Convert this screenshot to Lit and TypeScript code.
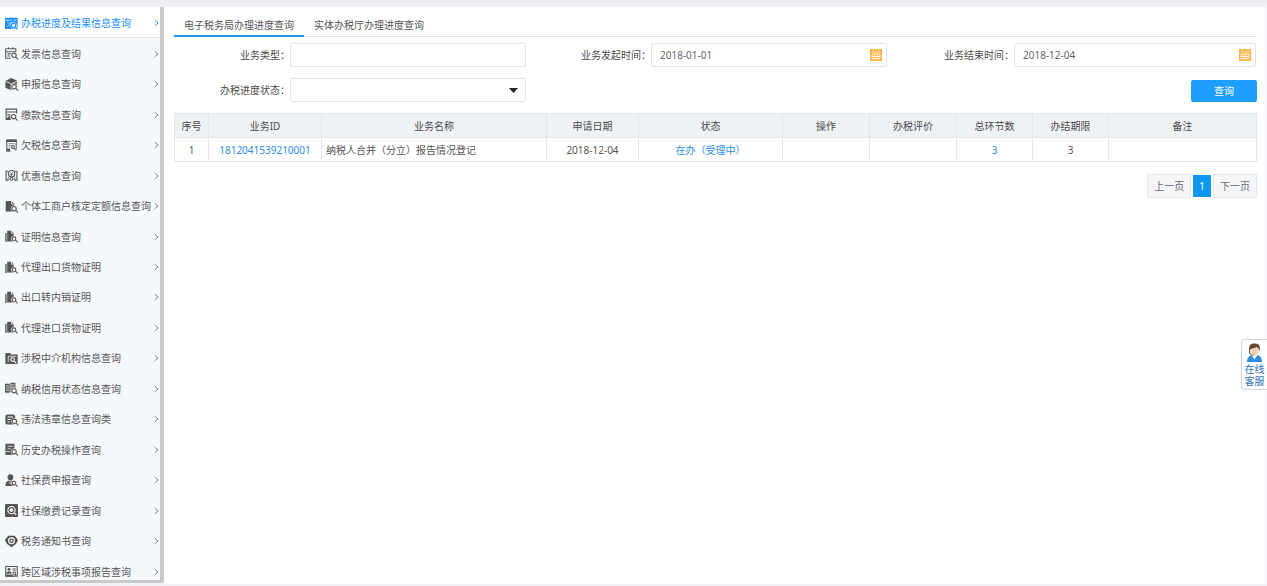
import { LitElement, html, svg, css } from "lit";
import { customElement, property } from "lit/decorators.js";
import { classMap } from "lit/directives/class-map.js";

const lens = (x: number, y: number, r = 6) => svg`
  <circle class="halo" cx=${x} cy=${y} r=${r + 2}></circle>
  <path class="halo-line" d="M${x + r - 1} ${y + r - 1}l6 6"></path>
  <circle class="ring" cx=${x} cy=${y} r=${r}></circle>
  <path class="line" d="M${x + r - 1} ${y + r - 1}l6 6"></path>`;

const stack = svg`
  <path class="soft" d="M0 8h5v25H0z"></path>
  <path class="solid" d="M6 2h12l6 6v24H6z"></path>
  <path class="cut thin" d="M18 2v7h6"></path>
  ${lens(25, 24, 5)}`;

const glyphs: Record<string, unknown> = {
  progress: svg`
    <path class="solid" d="M0 2h35v31H0z"></path>
    <path class="cut thin" d="M0 9h18M23 9h9M6 14l7 5 7-5M6 27l6-6"></path>
    ${lens(24, 23, 6)}`,
  invoice: svg`
    <path class="line" d="M2 5h28v8M2 5v26h14M2 13h28M7 19h9M7 25h7M10 1v5M22 1v5"></path>
    ${lens(25, 23, 6)}`,
  cube: svg`
    <path class="solid" d="M17 0l16 7v19L17 34 1 27V8z"></path>
    <path class="cut thin" d="M1 9l16 7 16-7M17 16v18"></path>
    ${lens(25, 24, 6)}`,
  payment: svg`
    <path class="line" d="M16 32H3V3h29v12M3 11h29M6 19h9"></path>
    <path class="solid" d="M3 33v-4l12-9v13z"></path>
    ${lens(24, 24, 6)}`,
  arrears: svg`
    <path class="line" d="M15 33H5V3h26v28"></path>
    <path class="solid" d="M4 2h28v6H4zM4 27h10v7H4z"></path>
    <path class="line thin" d="M10 13h16M10 18h7M10 23h5"></path>
    ${lens(22, 22, 4)}`,
  discount: svg`
    <path class="line" d="M8 6H3v25h6M27 6h6v25h-6"></path>
    <circle class="ring" cx="18" cy="13" r="9"></circle>
    <path class="line thin" d="M14 9l4 5 4-5M18 14v6M13 15h10M10 21l-3 10 6-3M26 21l3 10-6-3"></path>
    <circle class="ring" cx="18" cy="27" r="4"></circle>`,
  household: svg`
    <path class="solid" d="M2 3h16l8 8v21H2z"></path>
    <path class="cut thin" d="M18 3v8h8"></path>
    ${lens(25, 24, 6)}`,
  stack,
  agency: svg`
    <path class="solid" d="M1 3h13l3 4h18v26H1z"></path>
    <path class="cut thin" d="M9 12h22M9 12v16"></path>
    <circle class="cut" cx="21" cy="21" r="5"></circle>
    <path class="cut" d="M25 25l6 6"></path>`,
  credit: svg`
    <path class="solid" d="M0 5h13v25H0zM15 2h14v26H15z"></path>
    <path class="cut thin" d="M2 11h9M2 17h9M2 23h9M16 8h11M16 14h11"></path>
    ${lens(25, 24, 6)}`,
  violation: svg`
    <rect class="solid" x="1" y="4" width="27" height="28" rx="6"></rect>
    <path class="cut" d="M7 11h15M7 18h8M7 25h6"></path>
    ${lens(26, 23, 6)}`,
  history: svg`
    <path class="solid" d="M1 2h25v31H1z"></path>
    <path class="cut thin" d="M7 9h16M7 16h9M1 24h14"></path>
    ${lens(25, 24, 6)}`,
  person: svg`
    <circle class="solid" cx="15" cy="9" r="8"></circle>
    <path class="solid" d="M1 33c0-10 5-15 14-15s12 5 12 15z"></path>
    <path class="cut thin" d="M14 19v9"></path>
    ${lens(25, 25, 5)}`,
  record: svg`
    <rect class="solid" x="0" y="0" width="36" height="36" rx="3"></rect>
    <circle class="cut" cx="18" cy="17" r="10"></circle>
    <circle class="paper" cx="18" cy="17" r="5"></circle>
    <path class="cut" d="M25 24l6 6"></path>`,
  notice: svg`
    <path class="solid" d="M9 2h18l9 12-5 10-13 10L5 24 0 14z"></path>
    <circle class="cut" cx="18" cy="16" r="8"></circle>
    <circle class="paper" cx="18" cy="16" r="3"></circle>`,
  region: svg`
    <path class="ring" d="M2 4h32v27H2z"></path>
    <circle class="solid" cx="11" cy="12" r="4"></circle>
    <path class="solid" d="M4 24c0-9 14-9 14 0zM2 26h32v6H2z"></path>
    <path class="line" d="M21 11h9M21 17h9"></path>
    ${lens(26, 24, 4)}`,
};

@customElement("nav-icon")
class NavIcon extends LitElement {
  @property() name = "";

  static styles = css`
    :host { display: block; width: 13px; height: 13px; flex: none; }
    svg { display: block; width: 100%; height: 100%; overflow: visible; }
    .solid { fill: currentColor; }
    .soft { fill: currentColor; opacity: 0.75; }
    .paper { fill: #fff; }
    .line, .ring, .cut { fill: none; stroke: currentColor; stroke-width: 3; }
    .line.thin, .cut.thin { stroke-width: 2; }
    .cut { stroke: #fff; }
    .halo { fill: #f5f9fc; stroke: #f5f9fc; stroke-width: 2; }
    .halo-line { stroke: #f5f9fc; stroke-width: 6; }
  `;

  render() {
    return html`<svg viewBox="0 0 36 36" aria-hidden="true">${glyphs[this.name]}</svg>`;
  }
}

const menu = [
  ["progress", "办税进度及结果信息查询"],
  ["invoice", "发票信息查询"],
  ["cube", "申报信息查询"],
  ["payment", "缴款信息查询"],
  ["arrears", "欠税信息查询"],
  ["discount", "优惠信息查询"],
  ["household", "个体工商户核定定额信息查询"],
  ["stack", "证明信息查询"],
  ["stack", "代理出口货物证明"],
  ["stack", "出口转内销证明"],
  ["stack", "代理进口货物证明"],
  ["agency", "涉税中介机构信息查询"],
  ["credit", "纳税信用状态信息查询"],
  ["violation", "违法违章信息查询类"],
  ["history", "历史办税操作查询"],
  ["person", "社保费申报查询"],
  ["record", "社保缴费记录查询"],
  ["notice", "税务通知书查询"],
  ["region", "跨区域涉税事项报告查询"],
];

const calendar = html`<svg class="calendar" viewBox="0 0 12 12" aria-hidden="true">
  <path fill="#fbb03b" d="M0 0h12v12H0z"></path>
  <path stroke="#fff" fill="none" stroke-width=".8" d="M3 0v1.5M9 0v1.5M1.5 3h9M2 5.2h8v4.6H2zM2 7.5h8M4.7 5.2v4.6M7.3 5.2v4.6"></path>
</svg>`;

@customElement("app-root")
class AppRoot extends LitElement {
  static styles = css`
    :host {
      display: block;
      color: #4a4a4a;
      background: #fff;
      font: 10px/16px "Noto Sans", "Noto Sans CJK SC", sans-serif;
    }
    * { box-sizing: border-box; }
    a { color: inherit; text-decoration: none; }
    button, input, select { font: inherit; color: inherit; margin: 0; }
    .page {
      display: flex;
      height: 100vh;
      padding-bottom: 2px;
      border-top: 7px solid #eeeef4;
      background: #f1f2f5;
    }
    .side {
      flex: none;
      width: 164px;
      height: calc(100% - 1px);
      overflow: hidden;
      border: solid #c9c9c9;
      border-width: 0 4px 3px 0;
      border-bottom-right-radius: 3px;
      background: #f5f9fc;
    }
    .menu {
      display: grid;
      grid-auto-rows: minmax(30px, 1fr);
      height: calc(100vh - 6px);
      margin: 0;
      padding: 1px 0 0;
      list-style: none;
    }
    .menu a {
      display: flex;
      align-items: center;
      gap: 3px;
      height: 100%;
      padding: 0 2px 0 5px;
      color: #555;
      white-space: nowrap;
    }
    .menu .active {
      color: #1890f5;
      background: #fff;
      box-shadow: 0 -1px #fff, inset 0 -1px #dde1e6;
    }
    .text { flex: 1; min-width: 0; }
    .arrow { flex: none; width: 5px; height: 8px; color: #888; }
    .active .arrow { color: #1890f5; }
    .main {
      flex: 1;
      min-width: 0;
      padding: 8px 9px 0 10px;
      border-right: 1px solid #f0f1f4;
      background: #fff;
    }
    .tabs { display: flex; border-bottom: 1px solid #dfe3e8; }
    .tab {
      height: 22px;
      margin-bottom: -1px;
      padding: 0 10px;
      border: 0;
      border-bottom: 2px solid transparent;
      background: none;
      color: #555;
    }
    .tab.on { border-color: #2295e8; }
    .form {
      display: grid;
      grid-template-columns: repeat(3, 1fr);
      gap: 11px 0;
      padding: 6px 0 11px;
    }
    .field { display: flex; align-items: center; padding-right: 9px; }
    .field.last { padding-right: 1px; }
    .field label { flex: none; width: 116px; text-align: right; }
    .field.last label { width: 118px; }
    .control { position: relative; flex: 1; min-width: 0; }
    .control input, .control select {
      display: block;
      width: 100%;
      height: 24px;
      padding: 0 8px;
      border: 1px solid #e2e4e7;
      border-radius: 2px;
      background: #fff;
      color: #666;
      appearance: none;
      outline: none;
    }
    .calendar { position: absolute; right: 5px; top: 6px; width: 12px; height: 12px; }
    .caret { position: absolute; right: 8px; top: 10px; width: 9px; height: 5px; pointer-events: none; }
    .submit {
      grid-column: 3;
      justify-self: end;
      align-self: end;
      width: 66px;
      height: 22px;
      padding: 0;
      border: 0;
      border-radius: 2px;
      background: #1e9fff;
      color: #fff;
    }
    table { width: 100%; table-layout: fixed; border-collapse: collapse; }
    th, td {
      height: 24px;
      padding: 0 4px;
      border: 1px solid #e3e6ea;
      font-weight: 400;
      text-align: center;
      white-space: nowrap;
    }
    th { background: #eff2f5; }
    td { color: #555; }
    .name { text-align: left; }
    td a { color: #2a8fe6; }
    .c-no { width: 34px; }
    .c-id { width: 113px; }
    .c-date { width: 92px; }
    .c-state { width: 144px; }
    .c-mid { width: 87px; }
    .c-num { width: 76px; }
    .c-note { width: 148px; }
    .pager { display: flex; justify-content: flex-end; gap: 1px; padding-top: 12px; }
    .pager button {
      height: 24px;
      padding: 0 6px;
      border: 1px solid #e6e8eb;
      background: #f5f6f8;
      color: #667;
    }
    .pager .current { border-color: #fff; background: #0c97f2; color: #fff; }
    .service {
      position: fixed;
      right: -1px;
      top: 339px;
      display: flex;
      flex-direction: column;
      align-items: center;
      width: 27px;
      padding: 3px 0 2px;
      border: 1px solid #cdd5dd;
      border-radius: 3px 0 0 3px;
      background: #fff;
      color: #2f6fb5;
      line-height: 12px;
      text-align: center;
    }
    .agent { width: 17px; height: 20px; }
  `;

  render() {
    return html`
      <div class="page">
        <nav class="side">
          <ul class="menu">
            ${menu.map(
              ([icon, text], i) => html`<li>
                <a href="#" class=${classMap({ active: i === 0 })}>
                  <nav-icon name=${icon}></nav-icon>
                  <span class="text">${text}</span>
                  <svg class="arrow" viewBox="0 0 5 8" aria-hidden="true">
                    <path d="M.7 1l3.3 3L.7 7" fill="none" stroke="currentColor"></path>
                  </svg>
                </a>
              </li>`
            )}
          </ul>
        </nav>
        <main class="main">
          <div class="tabs" role="tablist">
            <button class="tab on" role="tab" aria-selected="true">电子税务局办理进度查询</button>
            <button class="tab" role="tab" aria-selected="false">实体办税厅办理进度查询</button>
          </div>
          <form class="form" @submit=${(e: Event) => e.preventDefault()}>
            <div class="field">
              <label for="kind">业务类型：</label>
              <div class="control"><input id="kind" type="text" /></div>
            </div>
            <div class="field">
              <label for="from">业务发起时间：</label>
              <div class="control"><input id="from" type="text" value="2018-01-01" />${calendar}</div>
            </div>
            <div class="field last">
              <label for="to">业务结束时间：</label>
              <div class="control"><input id="to" type="text" value="2018-12-04" />${calendar}</div>
            </div>
            <div class="field">
              <label for="state">办税进度状态：</label>
              <div class="control">
                <select id="state"><option></option></select>
                <svg class="caret" viewBox="0 0 9 5" aria-hidden="true"><path d="M0 0h9L4.5 5z" fill="#222"></path></svg>
              </div>
            </div>
            <button class="submit">查询</button>
          </form>
          <table>
            <colgroup>
              <col class="c-no" /><col class="c-id" /><col /><col class="c-date" /><col class="c-state" />
              <col class="c-mid" /><col class="c-mid" /><col class="c-num" /><col class="c-num" /><col class="c-note" />
            </colgroup>
            <thead>
              <tr>
                ${["序号", "业务ID", "业务名称", "申请日期", "状态", "操作", "办税评价", "总环节数", "办结期限", "备注"].map(
                  (t) => html`<th scope="col">${t}</th>`
                )}
              </tr>
            </thead>
            <tbody>
              <tr>
                <td>1</td>
                <td><a href="#">1812041539210001</a></td>
                <td class="name">纳税人合并（分立）报告情况登记</td>
                <td>2018-12-04</td>
                <td><a href="#">在办（受理中）</a></td>
                <td></td>
                <td></td>
                <td><a href="#">3</a></td>
                <td>3</td>
                <td></td>
              </tr>
            </tbody>
          </table>
          <div class="pager">
            <button>上一页</button>
            <button class="current" aria-current="page">1</button>
            <button>下一页</button>
          </div>
        </main>
      </div>
      <a class="service" href="#">
        <svg class="agent" viewBox="0 0 34 40" aria-hidden="true">
          <path d="M2 38c0-9 5-13 10-14h10c6 1 10 5 10 14z" fill="#2f8fe0"></path>
          <path d="M11 24l6 9 6-9z" fill="#fff"></path>
          <ellipse cx="17" cy="14" rx="8" ry="11" fill="#f6cfae"></ellipse>
          <path d="M7 17C4 4 10 1 17 1s13 3 10 16c-1-5-3-8-6-9-4 3-9 2-11 4-2 1-2 3-3 5z" fill="#6b4630"></path>
          <path d="M7 14v6c2 4 5 4 8 4" fill="none" stroke="#555" stroke-width="2"></path>
        </svg>
        <span>在线<br />客服</span>
      </a>
    `;
  }
}
